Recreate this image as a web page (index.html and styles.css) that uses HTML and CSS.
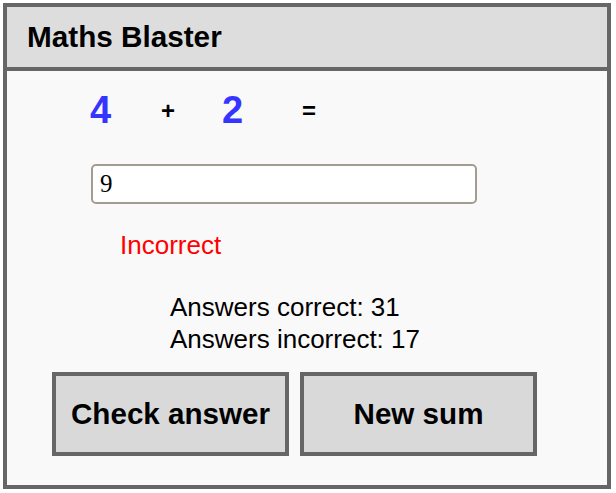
FILE: index.html
```html
<!DOCTYPE html>
<html lang="en">
<head>
  <meta charset="UTF-8" />
  <meta name="viewport" content="width=device-width, initial-scale=1.0"/>
  <title>Maths Blaster</title>
  <link rel="stylesheet" href="styles.css">
</head>
<body>
  <div class="game">
    <h1 class="title">Maths Blaster</h1>

    <div class="sum">
      <span class="num" id="first">4</span>
      <span class="op">+</span>
      <span class="num" id="second">2</span>
      <span class="op">=</span>
    </div>

    <input type="text" class="answer" id="answer" value="9" />

    <div class="feedback" id="feedback">Incorrect</div>

    <div class="score">
      <div>Answers correct: <span id="correct">31</span></div>
      <div>Answers incorrect: <span id="incorrect">17</span></div>
    </div>

    <div class="buttons">
      <button id="check">Check answer</button>
      <button id="next">New sum</button>
    </div>
  </div>

  <script>
    let correct = 31;
    let incorrect = 17;

    document.getElementById('check').addEventListener('click', function() {
      const a = parseInt(document.getElementById('first').textContent);
      const b = parseInt(document.getElementById('second').textContent);
      const guess = parseInt(document.getElementById('answer').value);
      const feedback = document.getElementById('feedback');

      if (guess === a + b) {
        correct++;
        feedback.textContent = 'Correct';
        feedback.className = 'feedback right';
      } else {
        incorrect++;
        feedback.textContent = 'Incorrect';
        feedback.className = 'feedback';
      }
      document.getElementById('correct').textContent = correct;
      document.getElementById('incorrect').textContent = incorrect;
    });

    document.getElementById('next').addEventListener('click', function() {
      document.getElementById('first').textContent = Math.floor(Math.random() * 10);
      document.getElementById('second').textContent = Math.floor(Math.random() * 10);
      document.getElementById('answer').value = '';
      document.getElementById('feedback').textContent = '';
    });
  </script>
</body>
</html>
```

FILE: styles.css
```css
body {
  margin: 0;
  font-family: "Liberation Sans", Arial, sans-serif;
}
.game {
  margin: 3px;
  width: 600px;
  height: 478px;
  border: 4px solid #666;
  background: #f9f9f9;
}
.title {
  margin: 0;
  height: 60px;
  line-height: 60px;
  padding-left: 20px;
  background: #ddd;
  border-bottom: 4px solid #666;
  font-size: 29.7px;
  font-weight: bold;
}
.sum {
  display: grid;
  grid-template-columns: 71px 61px 80px auto;
  align-items: center;
  margin: 18px 0 0 83px;
}
.num {
  color: #3535ff;
  font-weight: bold;
  font-size: 38px;
}
.op {
  font-weight: bold;
  font-size: 24px;
}
.answer {
  display: block;
  box-sizing: border-box;
  width: 386px;
  height: 40px;
  margin: 32px 0 0 84px;
  padding: 0 7px;
  border: 2px solid #a39d91;
  border-radius: 5px;
  background: #fff;
  font-family: "Liberation Serif", "Times New Roman", serif;
  font-size: 25px;
}
.feedback {
  margin: 26px 0 0 113px;
  color: #f00;
  font-size: 26px;
  min-height: 29px;
}
.feedback.right {
  color: #080;
}
.score {
  margin: 30px 0 0 163px;
  font-size: 26px;
  line-height: 32px;
}
.buttons {
  display: flex;
  gap: 11px;
  margin: 17px 0 0 45px;
}
.buttons button {
  width: 237px;
  height: 84px;
  border: 4px solid #666;
  background: #d9d9d9;
  color: #000;
  font-family: "Liberation Sans", Arial, sans-serif;
  font-size: 29.6px;
  font-weight: bold;
}
```
